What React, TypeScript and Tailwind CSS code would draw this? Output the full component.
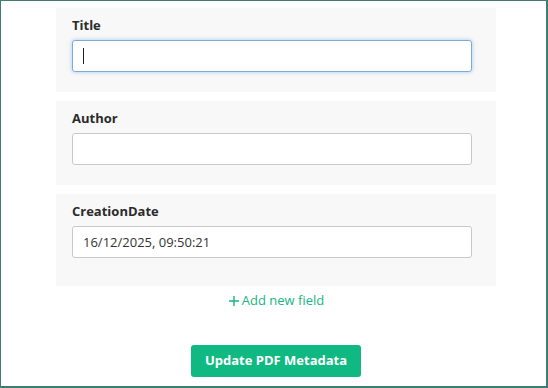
import React from 'react';

type Field = { name: string; value: string; focused?: boolean; extra?: boolean };

const fields: Field[] = [
  { name: 'Title', value: '', focused: true },
  { name: 'Author', value: '' },
  { name: 'CreationDate', value: '16/12/2025, 09:50:21', extra: true },
];

const FieldBox: React.FC<{ field: Field }> = ({ field }) => (
  <div className={`bg-[#f8f8f8] px-4 pt-[7px] ${field.extra ? 'pb-[28px]' : 'pb-[20px]'}`}>
    <label className="block text-[13px] font-bold leading-[20px] text-[#2b2b2b] mb-[5px]">{field.name}</label>
    <div className="relative w-[400px]">
      <input
        readOnly
        value={field.value}
        className={`block w-full h-[32px] rounded-[3px] bg-white px-[10px] text-[13px] text-[#333] outline-none ${
          field.focused
            ? 'border border-[#79ade0] shadow-[0_0_4px_rgba(100,160,230,0.55)]'
            : 'border border-[#c9c9c9]'
        }`}
      />
      {field.focused && <span className="absolute left-[11px] top-[8px] h-[16px] w-px bg-[#222]" />}
    </div>
  </div>
);

const App: React.FC = () => {
  return (
    <div
      className="w-[548px] h-[388px] bg-white border-l border-t border-r-2 border-b-2 border-[#3f7d74] overflow-hidden"
      style={{ fontFamily: '"Open Sans", "Noto Sans", sans-serif' }}
    >
      <div className="w-[440px] ml-[55px] pt-[7px] flex flex-col gap-[9px]">
        {fields.map(f => (
          <FieldBox key={f.name} field={f} />
        ))}
      </div>
      <div className="w-[440px] ml-[55px] flex flex-col items-center">
        <button className="mt-[5px] flex items-center gap-[2px] text-[13px] text-[#17b584]">
          <svg width="12" height="12" viewBox="0 0 12 12" fill="none" stroke="currentColor" strokeWidth="1.4">
            <path d="M6 1v10M1 6h10" />
          </svg>
          Add new field
        </button>
        <button className="mt-[34px] h-[32px] px-[14px] rounded-[3px] bg-[#10b981] text-white text-[13px] font-bold">
          Update PDF Metadata
        </button>
      </div>
    </div>
  );
};

export default App;
